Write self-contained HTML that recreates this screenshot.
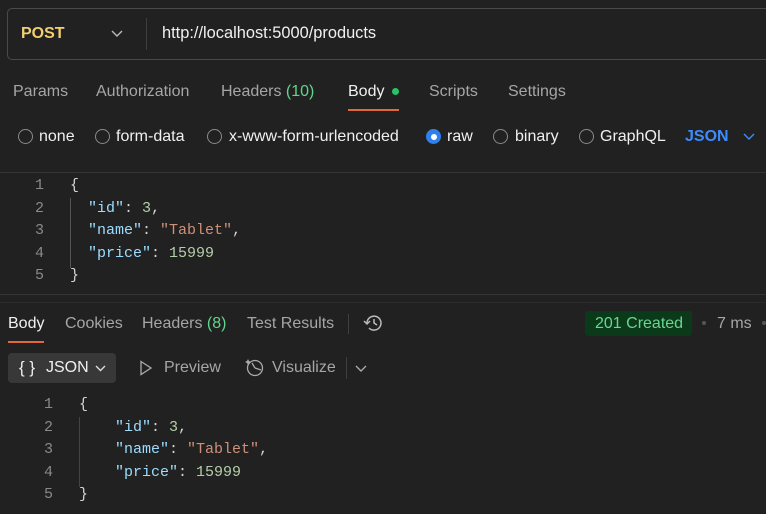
<!DOCTYPE html>
<html><head><meta charset="utf-8"><style>
*{margin:0;padding:0;box-sizing:border-box}
body{width:766px;height:514px;background:#212121;font-family:"Liberation Sans",sans-serif;color:#a6a6a6;position:relative;overflow:hidden}
.a{position:absolute;white-space:nowrap}
.t{font-size:16px}
.w{color:#f0f0f0}
.g{color:#5fd68a}
.mono{font-family:"Liberation Mono",monospace;font-size:15px}
.ln{color:#8a8a8a}
.k{color:#9cdcfe}.s{color:#ce9178}.n{color:#b5cea8}.p{color:#d4d4d4}
.r{position:absolute;width:15px;height:15px;border:1.3px solid #8a8a8a;border-radius:50%}
</style></head><body>
<div class="a" style="left:7px;top:8px;width:770px;height:52px;border:1px solid #4a4a4a;border-radius:5px"></div>
<div class="a" style="left:21px;top:25px;font-size:16px;font-weight:bold;color:#f2cf6f">POST</div>
<svg class="a" style="left:111px;top:30px" width="12" height="8"><path d="M1 1l5 5 5-5" stroke="#bbb" stroke-width="1.4" fill="none"/></svg>
<div class="a" style="left:146px;top:18px;width:1px;height:32px;background:#3e3e3e"></div>
<div class="a w" style="left:162px;top:24px;font-size:16.4px">http://localhost:5000/products</div>

<div class="a t" style="left:13px;top:83px">Params</div>
<div class="a t" style="left:96px;top:83px">Authorization</div>
<div class="a t" style="left:221px;top:83px">Headers <span class="g">(10)</span></div>
<div class="a t w" style="left:348px;top:83px">Body</div>
<div class="a" style="left:392px;top:88px;width:7px;height:7px;border-radius:50%;background:#27c26b"></div>
<div class="a" style="left:348px;top:109px;width:51px;height:2px;background:#e0683a"></div>
<div class="a t" style="left:429px;top:83px">Scripts</div>
<div class="a t" style="left:508px;top:83px">Settings</div>

<div class="r" style="left:18px;top:129px"></div><div class="a t w" style="left:39px;top:128px">none</div>
<div class="r" style="left:95px;top:129px"></div><div class="a t w" style="left:116px;top:128px">form-data</div>
<div class="r" style="left:207px;top:129px"></div><div class="a t w" style="left:229px;top:128px">x-www-form-urlencoded</div>
<div class="a" style="left:426px;top:129px;width:15px;height:15px;border-radius:50%;background:#2f80ed;border:0"><div style="position:absolute;left:4.5px;top:4.5px;width:6px;height:6px;border-radius:50%;background:#fff"></div></div><div class="a t w" style="left:447px;top:128px">raw</div>
<div class="r" style="left:493px;top:129px"></div><div class="a t w" style="left:515px;top:128px">binary</div>
<div class="r" style="left:579px;top:129px"></div><div class="a t w" style="left:600px;top:128px">GraphQL</div>
<div class="a t" style="left:685px;top:128px;color:#3d8bfd;font-weight:bold">JSON</div>
<svg class="a" style="left:743px;top:133px" width="12" height="8"><path d="M1 1l5 5 5-5" stroke="#3d8bfd" stroke-width="1.4" fill="none"/></svg>

<div class="a" style="left:0;top:172px;width:766px;height:1px;background:#353535"></div>

<div class="a mono ln" style="left:34px;top:175px;line-height:22.5px;text-align:right;width:10px">1<br>2<br>3<br>4<br>5</div>
<div class="a" style="left:70px;top:198px;width:1px;height:70px;background:#555"></div>
<div class="a mono" style="left:70px;top:175px;line-height:22.5px"><span class="p">{</span><br>&nbsp;&nbsp;<span class="k">"id"</span><span class="p">: </span><span class="n">3</span><span class="p">,</span><br>&nbsp;&nbsp;<span class="k">"name"</span><span class="p">: </span><span class="s">"Tablet"</span><span class="p">,</span><br>&nbsp;&nbsp;<span class="k">"price"</span><span class="p">: </span><span class="n">15999</span><br><span class="p">}</span></div>

<div class="a" style="left:0;top:294px;width:766px;height:1px;background:#353535"></div>
<div class="a" style="left:0;top:302px;width:766px;height:1px;background:#2c2c2c"></div>

<div class="a t w" style="left:8px;top:315px">Body</div>
<div class="a" style="left:8px;top:341px;width:36px;height:2px;background:#e0683a"></div>
<div class="a t" style="left:65px;top:315px">Cookies</div>
<div class="a t" style="left:142px;top:315px">Headers <span class="g">(8)</span></div>
<div class="a t" style="left:247px;top:315px">Test Results</div>
<div class="a" style="left:348px;top:314px;width:1px;height:20px;background:#3e3e3e"></div>
<svg class="a" style="left:363px;top:313px" width="22" height="20"><path d="M4 10a7 7 0 1 1 2 5" stroke="#bbb" stroke-width="1.5" fill="none"/><path d="M1 8l3 3 3-3" stroke="#bbb" stroke-width="1.5" fill="none"/><path d="M11 6v4l3 2" stroke="#bbb" stroke-width="1.5" fill="none"/></svg>

<div class="a" style="left:585px;top:311px;width:107px;height:25px;background:#0b3a1b;border-radius:3px"></div>
<div class="a t" style="left:595px;top:315px;color:#6ad68f">201 Created</div>
<div class="a" style="left:702px;top:321px;width:4px;height:4px;border-radius:50%;background:#555"></div>
<div class="a t" style="left:717px;top:315px">7 ms</div>
<div class="a" style="left:762px;top:321px;width:4px;height:4px;border-radius:50%;background:#555"></div>

<div class="a" style="left:8px;top:353px;width:108px;height:30px;background:#383838;border-radius:4px"></div>
<div class="a w" style="left:19px;top:358px;font-size:17px">{ }</div>
<div class="a t w" style="left:46px;top:359px">JSON</div>
<svg class="a" style="left:95px;top:365px" width="11" height="7"><path d="M1 1l4.5 4.5L10 1" stroke="#ddd" stroke-width="1.4" fill="none"/></svg>
<svg class="a" style="left:139px;top:360px" width="14" height="16"><path d="M2 1.5l10 6.5-10 6.5z" stroke="#aaa" stroke-width="1.3" fill="none"/></svg>
<div class="a t" style="left:164px;top:359px">Preview</div>
<svg class="a" style="left:245px;top:357px" width="20" height="20"><circle cx="10" cy="11" r="7.5" stroke="#aaa" stroke-width="1.3" fill="none"/><path d="M10 11l-3-5M10 11l6 2" stroke="#aaa" stroke-width="1.3"/><path d="M3 2l1 2 2 1-2 1-1 2-1-2-2-1 2-1z" fill="#aaa"/></svg>
<div class="a t" style="left:272px;top:359px">Visualize</div>
<div class="a" style="left:346px;top:357px;width:1px;height:22px;background:#3e3e3e"></div>
<svg class="a" style="left:355px;top:365px" width="12" height="7"><path d="M1 1l5 5 5-5" stroke="#aaa" stroke-width="1.4" fill="none"/></svg>

<div class="a mono ln" style="left:43px;top:394px;line-height:22.5px;text-align:right;width:10px">1<br>2<br>3<br>4<br>5</div>
<div class="a" style="left:79px;top:417px;width:1px;height:70px;background:#444"></div>
<div class="a mono" style="left:79px;top:394px;line-height:22.5px"><span class="p">{</span><br>&nbsp;&nbsp;&nbsp;&nbsp;<span class="k">"id"</span><span class="p">: </span><span class="n">3</span><span class="p">,</span><br>&nbsp;&nbsp;&nbsp;&nbsp;<span class="k">"name"</span><span class="p">: </span><span class="s">"Tablet"</span><span class="p">,</span><br>&nbsp;&nbsp;&nbsp;&nbsp;<span class="k">"price"</span><span class="p">: </span><span class="n">15999</span><br><span class="p">}</span></div>
</body></html>
